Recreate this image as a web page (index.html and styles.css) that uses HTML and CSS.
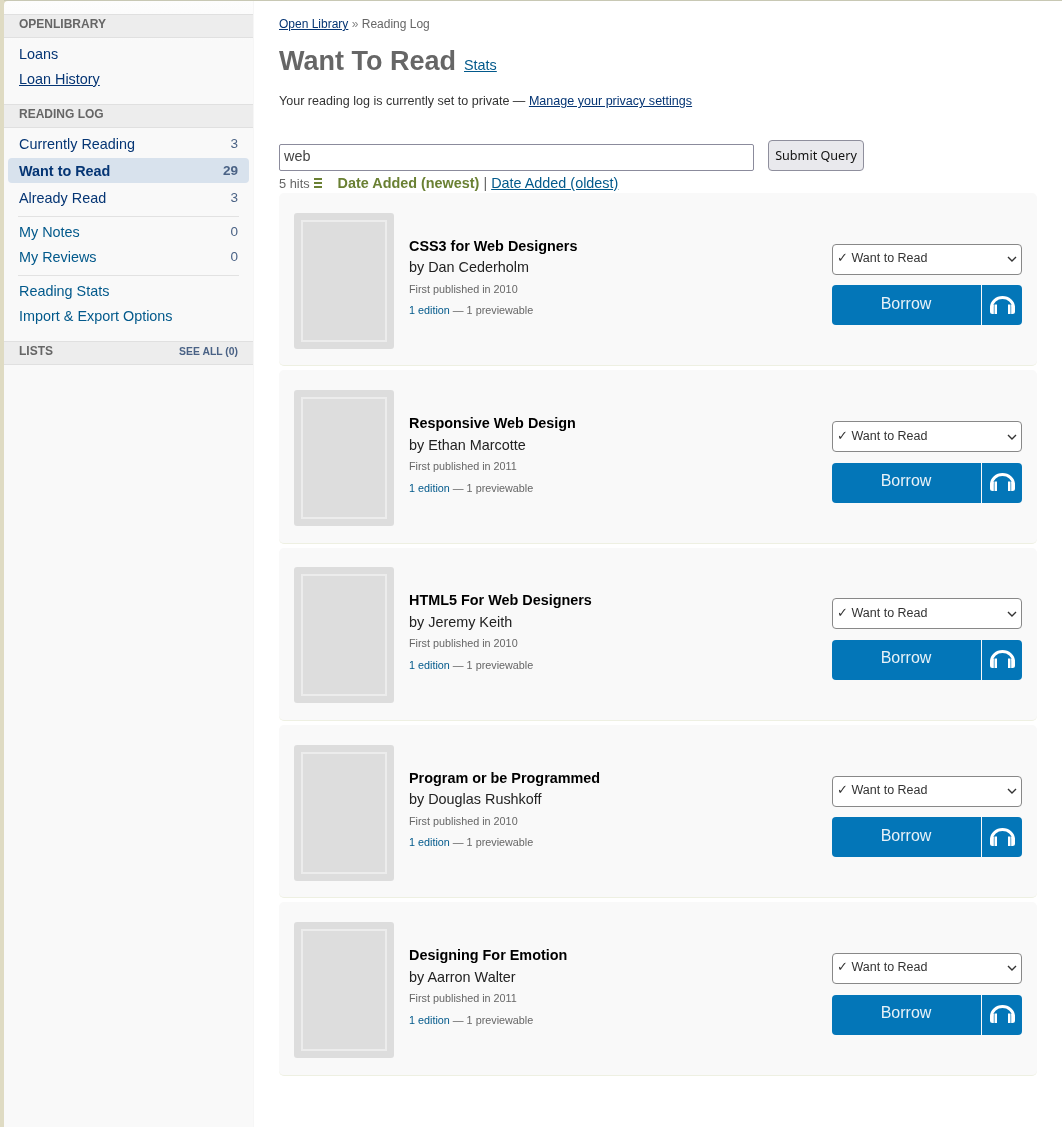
FILE: index.html
```html
<!DOCTYPE html>
<html lang="en">
<head>
<meta charset="utf-8">
<title>Want To Read</title>
<link rel="stylesheet" href="styles.css">
</head>
<body>
<svg class="defs" width="0" height="0" aria-hidden="true">
  <symbol id="headphones" viewBox="0 0 25 18">
    <path d="M1.600 11a10.900 9.500 0 0 1 21.800 0" fill="none" stroke="#fff" stroke-width="3"/>
    <path fill="#fff" d="M3.800 9v9H2.500A2.500 2.500 0 0 1 0 15.500v-4A2.500 2.500 0 0 1 2.500 9zM4.500 8.500H7V18H4.500zM18 8.500h2.500V18H18zM21.200 9h1.300A2.500 2.500 0 0 1 25 11.500v4a2.500 2.500 0 0 1-2.500 2.500h-1.300z"/>
  </symbol>
  <symbol id="chev" viewBox="0 0 10 6">
    <path d="M1 1l4 4 4-4" fill="none" stroke="#333" stroke-width="1.400"/>
  </symbol>
</svg>
<div class="page">
  <aside class="sidebar">
    <h3 class="sec-head first"><span>OPENLIBRARY</span></h3>
    <ul class="nav nav-a">
      <li><a class="dark" href="#">Loans</a></li>
      <li><a class="dark ul" href="#">Loan History</a></li>
    </ul>
    <h3 class="sec-head"><span>READING LOG</span></h3>
    <ul class="nav nav-b">
      <li class="tall"><a class="dark" href="#">Currently Reading</a><span class="count">3</span></li>
      <li class="tall active"><a class="dark" href="#">Want to Read</a><span class="count">29</span></li>
      <li class="tall"><a class="dark" href="#">Already Read</a><span class="count">3</span></li>
    </ul>
    <div class="rule rule-a"></div>
    <ul class="nav">
      <li><a href="#">My Notes</a><span class="count">0</span></li>
      <li><a href="#">My Reviews</a><span class="count">0</span></li>
    </ul>
    <div class="rule rule-b"></div>
    <ul class="nav">
      <li><a href="#">Reading Stats</a></li>
      <li><a href="#">Import &amp; Export Options</a></li>
    </ul>
    <h3 class="sec-head lists"><span>LISTS</span><a class="see-all" href="#">SEE ALL (0)</a></h3>
  </aside>
  <main class="main">
    <div class="crumbs"><a href="#">Open Library</a> <span class="sep">»</span> Reading Log</div>
    <div class="title-row"><h1>Want To Read</h1><a href="#" class="stats">Stats</a></div>
    <p class="privacy">Your reading log is currently set to private — <a href="#">Manage your privacy settings</a></p>
    <form class="search">
      <input class="search-input" type="text" value="web">
      <button class="submit" type="button">Submit Query</button>
    </form>
    <div class="sort">
      <span class="hits">5 hits</span>
      <svg class="sort-icon" width="8" height="10" viewBox="0 0 8 10"><path fill="#6a8033" d="M0 0h8v2H0zM0 4h8v2H0zM0 8h8v2H0z"/></svg>
      <b class="sort-on">Date Added (newest)</b>
      <span class="pipe">|</span>
      <a href="#">Date Added (oldest)</a>
    </div>

    <section class="card">
      <div class="cover"><div class="cover-in"></div></div>
      <div class="info">
        <div class="book-title">CSS3 for Web Designers</div>
        <div class="author">by Dan Cederholm</div>
        <div class="pub">First published in 2010</div>
        <div class="eds"><a href="#">1 edition</a> — 1 previewable</div>
      </div>
      <div class="actions">
        <div class="shelf"><span>✓ Want to Read</span><svg width="10" height="6"><use href="#chev"/></svg></div>
        <div class="btns"><a class="borrow" href="#">Borrow</a><a class="listen" href="#"><svg width="25" height="18"><use href="#headphones"/></svg></a></div>
      </div>
    </section>

    <section class="card">
      <div class="cover"><div class="cover-in"></div></div>
      <div class="info">
        <div class="book-title">Responsive Web Design</div>
        <div class="author">by Ethan Marcotte</div>
        <div class="pub">First published in 2011</div>
        <div class="eds"><a href="#">1 edition</a> — 1 previewable</div>
      </div>
      <div class="actions">
        <div class="shelf"><span>✓ Want to Read</span><svg width="10" height="6"><use href="#chev"/></svg></div>
        <div class="btns"><a class="borrow" href="#">Borrow</a><a class="listen" href="#"><svg width="25" height="18"><use href="#headphones"/></svg></a></div>
      </div>
    </section>

    <section class="card">
      <div class="cover"><div class="cover-in"></div></div>
      <div class="info">
        <div class="book-title">HTML5 For Web Designers</div>
        <div class="author">by Jeremy Keith</div>
        <div class="pub">First published in 2010</div>
        <div class="eds"><a href="#">1 edition</a> — 1 previewable</div>
      </div>
      <div class="actions">
        <div class="shelf"><span>✓ Want to Read</span><svg width="10" height="6"><use href="#chev"/></svg></div>
        <div class="btns"><a class="borrow" href="#">Borrow</a><a class="listen" href="#"><svg width="25" height="18"><use href="#headphones"/></svg></a></div>
      </div>
    </section>

    <section class="card">
      <div class="cover"><div class="cover-in"></div></div>
      <div class="info">
        <div class="book-title">Program or be Programmed</div>
        <div class="author">by Douglas Rushkoff</div>
        <div class="pub">First published in 2010</div>
        <div class="eds"><a href="#">1 edition</a> — 1 previewable</div>
      </div>
      <div class="actions">
        <div class="shelf"><span>✓ Want to Read</span><svg width="10" height="6"><use href="#chev"/></svg></div>
        <div class="btns"><a class="borrow" href="#">Borrow</a><a class="listen" href="#"><svg width="25" height="18"><use href="#headphones"/></svg></a></div>
      </div>
    </section>

    <section class="card">
      <div class="cover"><div class="cover-in"></div></div>
      <div class="info">
        <div class="book-title">Designing For Emotion</div>
        <div class="author">by Aarron Walter</div>
        <div class="pub">First published in 2011</div>
        <div class="eds"><a href="#">1 edition</a> — 1 previewable</div>
      </div>
      <div class="actions">
        <div class="shelf"><span>✓ Want to Read</span><svg width="10" height="6"><use href="#chev"/></svg></div>
        <div class="btns"><a class="borrow" href="#">Borrow</a><a class="listen" href="#"><svg width="25" height="18"><use href="#headphones"/></svg></a></div>
      </div>
    </section>
  </main>
</div>
</body>
</html>
```
FILE: styles.css
```css
* { box-sizing: border-box; }
html, body { margin: 0; padding: 0; }
body {
  height: 1127px;
  overflow: hidden;
  background: #dfdbc3;
  font-family: "Liberation Sans", Arial, sans-serif;
  color: #333;
}
.defs { display: block; height: 0; }
.page {
  display: flex;
  height: 1127px;
  margin-left: 4px;
  padding-top: 1px;
  background: linear-gradient(#c8c8b4, #c8c8b4) top / 100% 1px no-repeat;
  will-change: transform;
}
.sidebar {
  width: 250px;
  flex: none;
  background: linear-gradient(#fdfdfd, #f9f9f9 40px);
  border-top-left-radius: 4px;
  border-right: 1px solid #f6f6f6;
  padding-top: 13px;
}
.sec-head {
  display: flex;
  justify-content: space-between;
  margin: 0;
  height: 24px;
  padding: 2px 15px 0 15px;
  font-size: 12px;
  line-height: 14px;
  font-weight: bold;
  color: #666;
  background: #ededed;
  border-top: 1px solid #e0e0e0;
  border-bottom: 1px solid #e0e0e0;
}
.see-all { font-size: 10.400px; line-height: 16px; color: #4a6285; text-decoration: none; }
.nav { list-style: none; margin: 0; padding: 0; }
.nav li {
  display: flex;
  justify-content: space-between;
  align-items: center;
  height: 25px;
  padding: 0 15px 0 15px;
  font-size: 14.400px;
}
.nav a { color: #02598b; text-decoration: none; }
.nav a.dark { color: #053574; }
.nav a.ul { text-decoration: underline; }
.nav-a { padding: 3px 0 13px; }
.nav-b { padding-top: 2px; }
.nav li.tall { height: 27px; }
.nav li.active {
  margin: 1px 4px;
  padding: 0 11px;
  height: 25px;
  background: #d8e2ed;
  border-radius: 4px;
  font-weight: bold;
}
.count { font-size: 13.500px; color: #4a6285; }
.rule { height: 1px; margin: 0 14px; background: #e2e2e2; }
.rule-a { margin-top: 5px; margin-bottom: 2px; }
.rule-b { margin-top: 6px; margin-bottom: 2px; }
.lists { margin-top: 13px; }
.main { flex: 1; min-width: 0; padding: 16px 25px 0 25px; background: #fff; }
.crumbs { font-size: 12px; line-height: 15px; color: #666; }
.crumbs a { color: #053574; }
.sep { color: #888; }
.title-row { display: flex; align-items: baseline; margin-top: 11px; }
h1 { margin: 0; font-size: 27px; line-height: 36px; color: #666; font-weight: bold; }
.stats { margin-left: 8px; font-size: 14.400px; color: #02598b; }
.privacy { margin: 14px 0 0; font-size: 12.550px; line-height: 16px; color: #333; }
.privacy a { color: #053574; }
.search { display: flex; align-items: flex-end; margin-top: 31px; height: 31px; }
.search-input {
  width: 475px;
  height: 27px;
  padding: 0 4px 4px;
  font: 14.400px "Liberation Sans", sans-serif;
  color: #444;
  border: 1px solid #8b8b9c;
  border-radius: 2px;
  background: #fff;
}
.submit {
  margin-left: 14px;
  width: 96px;
  height: 31px;
  padding: 0;
  font: 12.600px "Noto Sans", sans-serif;
  color: #111;
  background: #e9e9ed;
  border: 1px solid #8f8f9d;
  border-radius: 4px;
}
.sort { display: flex; align-items: center; height: 20px; margin-top: 2px; font-size: 14.400px; color: #666; }
.hits { font-size: 12.800px; }
.sort-icon { margin-left: 4px; }
.sort-on { margin-left: 16px; color: #6a8033; }
.pipe { margin: 0 4px; }
.sort a { color: #02598b; }
.card {
  display: flex;
  align-items: center;
  height: 173.300px;
  margin-bottom: 4px;
  padding: 3px 15px 0;
  background: #f9f9f9;
  border-radius: 5px;
  border-bottom: 1px solid #eef0e2;
}
.sort + .card { margin-top: 0.100px; }
.cover {
  width: 100px;
  height: 136px;
  flex: none;
  padding: 7px;
  background: #ddd;
  border-radius: 3px;
}
.cover-in { height: 100%; border: 2px solid #ececec; }
.info { flex: 1; margin-left: 15px; margin-top: -7.340px; }
.book-title { font-size: 14.400px; line-height: 18px; font-weight: bold; color: #000; }
.author { font-size: 14.400px; line-height: 18px; margin-top: 3.600px; color: #222; }
.pub { font-size: 10.800px; line-height: 14px; margin-top: 5.400px; color: #666; }
.eds { font-size: 10.800px; line-height: 14px; margin-top: 7.650px; color: #666; }
.eds a { color: #02598b; text-decoration: none; }
.actions { width: 190px; flex: none; margin-top: 7.600px; }
.shelf {
  display: flex;
  justify-content: space-between;
  align-items: center;
  height: 31px;
  padding: 0 4px 3px 4px;
  font-size: 12.500px;
  color: #333;
  background: #fff;
  border: 1px solid #888;
  border-radius: 4px;
}
.shelf svg { margin-top: 3px; }
.btns { display: flex; margin-top: 10.600px; height: 40px; }
.borrow {
  width: 149px;
  display: flex;
  align-items: center;
  justify-content: center;
  padding: 0 1px 3px 0;
  color: #e8f2f8;
  font-size: 16px;
  text-decoration: none;
  background: #0376b8;
  border-radius: 4px 0 0 4px;
}
.listen {
  width: 40px;
  margin-left: 1px;
  display: flex;
  align-items: center;
  justify-content: center;
  padding-bottom: 1px;
  background: #0376b8;
  border-radius: 0 4px 4px 0;
}
```
